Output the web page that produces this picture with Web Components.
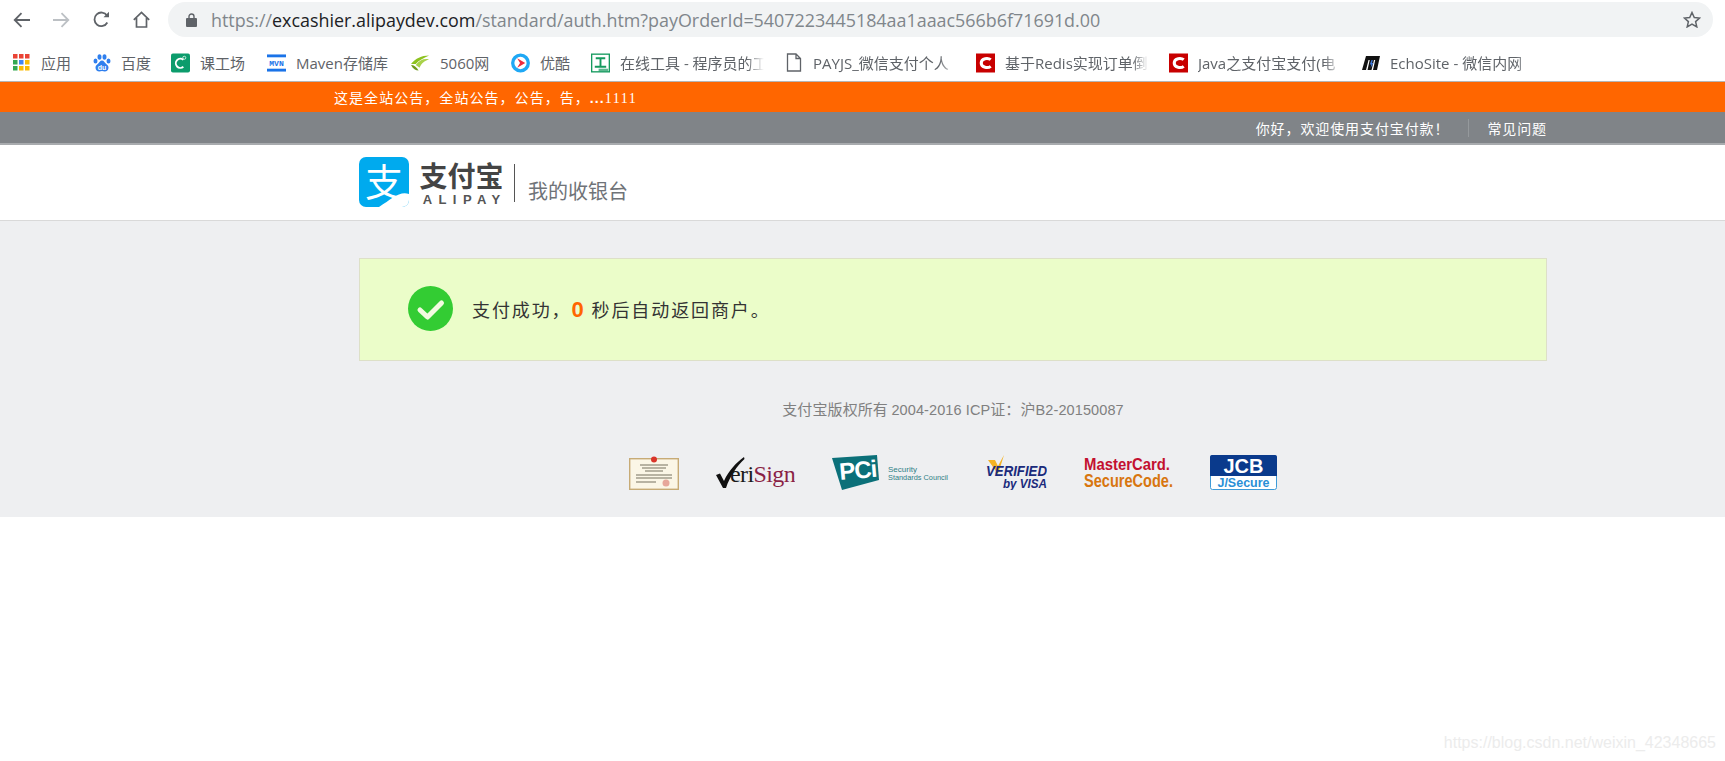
<!DOCTYPE html>
<html lang="zh">
<head>
<meta charset="utf-8">
<title>我的收银台</title>
<style>
  html, body { margin: 0; background: #fff; }
  body { position: relative; height: 761px; overflow: hidden; font-family: "Open Sans", "Noto Sans CJK SC", sans-serif; }
</style>
</head>
<body>
<browser-toolbar url-host="excashier.alipaydev.com" url-rest="/standard/auth.htm?payOrderId=5407223445184aa1aaac566b6f71691d.00"></browser-toolbar>
<bookmark-bar>
  <bookmark-item label="应用" width="31">
    <svg slot="icon" width="17" height="17" viewBox="0 0 17 17">
      <rect x="0" y="0" width="4.500" height="4.500" fill="#ea4335"/><rect x="6" y="0" width="4.500" height="4.500" fill="#ea4335"/><rect x="12" y="0" width="4.500" height="4.500" fill="#ea4335"/>
      <rect x="0" y="6" width="4.500" height="4.500" fill="#34a853"/><rect x="6" y="6" width="4.500" height="4.500" fill="#4285f4"/><rect x="12" y="6" width="4.500" height="4.500" fill="#fbbc05"/>
      <rect x="0" y="12" width="4.500" height="4.500" fill="#34a853"/><rect x="6" y="12" width="4.500" height="4.500" fill="#fbbc05"/><rect x="12" y="12" width="4.500" height="4.500" fill="#fbbc05"/>
    </svg>
  </bookmark-item>
  <bookmark-item label="百度" width="30">
    <svg slot="icon" width="18" height="18" viewBox="0 0 18 18" fill="#2f7fee">
      <ellipse cx="2.500" cy="7" rx="2" ry="2.600"/><ellipse cx="6.500" cy="3" rx="2" ry="2.800"/><ellipse cx="11.500" cy="3" rx="2" ry="2.800"/><ellipse cx="15.500" cy="7" rx="2" ry="2.600"/>
      <path d="M9 6.500c2 0 2.600 2 4 3.200 1.600 1.300 2.500 2.300 2.500 4 0 2.300-1.700 3.800-3.800 3.800-1 0-1.700-.4-2.700-.4s-1.700.4-2.700.4c-2.100 0-3.800-1.500-3.800-3.800 0-1.700.9-2.700 2.500-4C6.400 8.500 7 6.500 9 6.500z"/>
      <text x="9" y="15.500" text-anchor="middle" font-family="Liberation Sans" font-weight="700" font-size="7" fill="#fff">du</text>
    </svg>
  </bookmark-item>
  <bookmark-item label="课工场" width="47">
    <svg slot="icon" width="20" height="20" viewBox="0 0 20 20">
      <rect width="20" height="20" rx="2" fill="#0c9c6c"/>
      <path d="M13 6.700A4.800 4.800 0 1 0 13 14" fill="none" stroke="#fff" stroke-width="2"/>
      <circle cx="14" cy="4.500" r="1.600" fill="none" stroke="#cfeee2"/>
    </svg>
  </bookmark-item>
  <bookmark-item label="Maven存储库" width="95">
    <svg slot="icon" width="20" height="18" viewBox="0 0 20 18">
      <rect width="20" height="3" fill="#1a73e8"/><rect y="15" width="20" height="3" fill="#1a73e8"/>
      <text x="10" y="12.500" font-family="Liberation Mono" font-weight="700" font-size="8.500" text-anchor="middle" fill="#1a73e8">MVN</text>
    </svg>
  </bookmark-item>
  <bookmark-item label="5060网" width="51">
    <svg slot="icon" width="20" height="16" viewBox="0 0 20 16">
      <path d="M0 9C5 3 11 0 19 0 13 3 8 5 5 9z" fill="#8dc21f"/>
      <path d="M5 10C9 5 13 3 19 4 14 6 11 8 9 13z" fill="#a9d24a"/>
      <path d="M0 10C3 10 6 12 8 16 5 16 2 14 0 10z" fill="#6f9a1c"/>
    </svg>
  </bookmark-item>
  <bookmark-item label="优酷" width="31">
    <svg slot="icon" width="20" height="20" viewBox="0 0 20 20">
      <circle cx="10" cy="10" r="8.200" fill="none" stroke="#1fa8f5" stroke-width="3.500"/>
      <path d="M6.500 5L15 10l-8.500 5 3-5z" fill="#ee2b3d"/>
    </svg>
  </bookmark-item>
  <bookmark-item label="在线工具 - 程序员的工" width="144" fade>
    <svg slot="icon" width="20" height="20" viewBox="0 0 20 20">
      <rect x=".7" y=".7" width="18.600" height="18.600" fill="#fff" stroke="#159a5e" stroke-width="1.400"/>
      <path d="M5 5h10M10 5v9M4 14h12" stroke="#159a5e" stroke-width="2" fill="none"/>
      <rect x="8" y="16" width="10" height="3" fill="#159a5e" opacity=".7"/>
    </svg>
  </bookmark-item>
  <bookmark-item label="PAYJS_微信支付个人" width="143" fade>
    <svg slot="icon" width="16" height="19" viewBox="0 0 16 19">
      <path d="M1.500 1h8.500l4.500 4.500V18h-13z M10 1v4.500h4.500" fill="#fff" stroke="#5f6368" stroke-width="1.300"/>
    </svg>
  </bookmark-item>
  <bookmark-item label="基于Redis实现订单倒" width="144" fade>
    <svg slot="icon" width="20" height="20" viewBox="0 0 20 20">
      <rect width="20" height="20" fill="#c80000"/>
      <path d="M15.500 6.500C13 4.500 5.500 4.500 5.500 10s7.500 5.500 10 3.500" fill="none" stroke="#fff" stroke-width="3.200"/>
    </svg>
  </bookmark-item>
  <bookmark-item label="Java之支付宝支付(电" width="143" fade>
    <svg slot="icon" width="20" height="20" viewBox="0 0 20 20">
      <rect width="20" height="20" fill="#c80000"/>
      <path d="M15.500 6.500C13 4.500 5.500 4.500 5.500 10s7.500 5.500 10 3.500" fill="none" stroke="#fff" stroke-width="3.200"/>
    </svg>
  </bookmark-item>
  <bookmark-item label="EchoSite - 微信内网" width="143" fade>
    <svg slot="icon" width="18" height="14" viewBox="0 0 18 14">
      <path d="M4 0h14l-3 14h-4l2.200-10h-1.200L9.500 14h-4L7.700 4H6.500L4 14H0z" fill="#111"/>
      <path d="M9.500 4L7.800 8.500h1.500L8.500 12l3-5H10l.8-3z" fill="#3f78d8"/>
    </svg>
  </bookmark-item>
</bookmark-bar>
<notice-bar>这是全站公告，全站公告，公告，告，<b>...</b><span>1111</span></notice-bar>
<top-nav greeting="你好，欢迎使用支付宝付款！" link="常见问题"></top-nav>
<site-header title="我的收银台"></site-header>
<page-main>
  <result-card>支付成功，<em>0</em> 秒后自动返回商户。</result-card>
  <page-footer>支付宝版权所有 <span>2004-2016 ICP</span>证：沪<span>B2-20150087</span></page-footer>
  <trust-logos></trust-logos>
</page-main>
<water-mark>https://blog.csdn.net/weixin_42348665</water-mark>

<script>
class BrowserToolbar extends HTMLElement {
  constructor() {
    super();
    this.attachShadow({ mode: 'open' });
    this.shadowRoot.innerHTML = `
      <style>
        :host { display: flex; align-items: flex-start; height: 44px; padding: 2px 12px 0 13px; box-sizing: border-box; }
        .nav { display: flex; gap: 23px; height: 35px; align-items: center; width: 155px; flex: none; }
        svg { flex: none; display: block; }
        .bar { flex: 1; height: 35px; background: #f1f3f4; border-radius: 18px; display: flex; align-items: center; padding: 0 12px 0 18px; }
        .url { margin-left: 14px; flex: 1; font: 17.900px "Open Sans", sans-serif; color: #80868b; white-space: nowrap; }
        .url b { font-weight: 400; color: #202124; }
      </style>
      <div class="nav">
        <svg width="17" height="16" viewBox="0 0 17 16" fill="none" stroke="#5f6368" stroke-width="1.800"><path d="M17 8H2M8.500 1.200L1.700 8l6.800 6.800"/></svg>
        <svg width="17" height="16" viewBox="0 0 17 16" fill="none" stroke="#bcc0c4" stroke-width="1.800"><path d="M0 8h15M8.500 1.200L15.300 8l-6.800 6.800"/></svg>
        <svg width="17" height="17" viewBox="0 0 17 17" fill="none" stroke="#5f6368" stroke-width="1.800"><path d="M14.300 11.500A6.800 6.800 0 1 1 14 4.600"/><path d="M16 .8v5.500h-5.500z" fill="#5f6368" stroke="none"/></svg>
        <svg width="17" height="17" viewBox="0 0 17 17" fill="none" stroke="#5f6368" stroke-width="1.700"><path d="M.8 8.800L8.500 1.500l7.700 7.300M3.500 7v9h10V7"/></svg>
      </div>
      <div class="bar">
        <svg width="11" height="14" viewBox="0 0 11 14"><path d="M3 5V3.500a2.500 2.500 0 0 1 5 0V5" fill="none" stroke="#5f6368" stroke-width="1.400"/><rect y="5" width="11" height="9" rx="1" fill="#5f6368"/></svg>
        <span class="url">https://<b>${this.getAttribute('url-host')}</b>${this.getAttribute('url-rest')}</span>
        <svg width="18" height="17" viewBox="0 0 18 17" fill="none" stroke="#5f6368" stroke-width="1.500"><path d="M9 1.500l2.300 5 5.300.5-4 3.600 1.200 5.300L9 13.200l-4.800 2.700 1.200-5.300-4-3.600 5.300-.5z"/></svg>
      </div>`;
  }
}

class BookmarkBar extends HTMLElement {
  constructor() {
    super();
    this.attachShadow({ mode: 'open' });
    this.shadowRoot.innerHTML = `
      <style>
        :host { display: flex; align-items: center; gap: 20px; height: 38px; padding: 0 0 0 12px; box-sizing: border-box; border-bottom: 1px solid #b5b5b5; }
      </style>
      <slot></slot>`;
  }
}

class BookmarkItem extends HTMLElement {
  constructor() {
    super();
    this.attachShadow({ mode: 'open' });
    const fade = this.hasAttribute('fade');
    this.shadowRoot.innerHTML = `
      <style>
        :host { display: flex; align-items: center; gap: 10px; flex: none; }
        .icon { display: flex; width: 19px; justify-content: center; }
        .text { width: ${this.getAttribute('width')}px; overflow: hidden; white-space: nowrap; font: 15px "Open Sans", "Noto Sans CJK SC", sans-serif; color: #5f6368; line-height: 20px;
          ${fade ? '-webkit-mask-image: linear-gradient(to right, #000 88%, transparent);' : ''} }
      </style>
      <span class="icon"><slot name="icon"></slot></span>
      <span class="text">${this.getAttribute('label')}</span>`;
  }
}

class NoticeBar extends HTMLElement {
  constructor() {
    super();
    this.attachShadow({ mode: 'open' });
    this.shadowRoot.innerHTML = `
      <style>
        :host { display: flex; align-items: center; height: 30px; padding-left: 334px; background: #ff6600; color: #fff;
          font: 14px "Noto Sans CJK SC", sans-serif; letter-spacing: 1.050px; }
        ::slotted(b) { font-family: "Liberation Sans", sans-serif; }
        ::slotted(span) { font-family: "Liberation Serif", serif; letter-spacing: 1.500px; }
      </style>
      <div><slot></slot></div>`;
  }
}

class TopNav extends HTMLElement {
  constructor() {
    super();
    this.attachShadow({ mode: 'open' });
    this.shadowRoot.innerHTML = `
      <style>
        :host { display: flex; align-items: center; justify-content: flex-end; height: 33px; box-sizing: border-box; padding-right: 178px; background: #808488; border-bottom: 2px solid #a8abae; color: #fff;
          font: 14px "Noto Sans CJK SC", sans-serif; letter-spacing: .9px; }
        i { width: 1px; height: 18px; background: #95999c; margin: 0 18px 0 19px; }
      </style>
      <span>${this.getAttribute('greeting')}</span><i></i><span>${this.getAttribute('link')}</span>`;
  }
}

class SiteHeader extends HTMLElement {
  constructor() {
    super();
    this.attachShadow({ mode: 'open' });
    this.shadowRoot.innerHTML = `
      <style>
        :host { display: flex; align-items: center; height: 76px; box-sizing: border-box; padding-left: 359px; background: #fff; border-bottom: 1px solid #d9d9d9; font-family: "Noto Sans CJK SC", sans-serif; }
        .mark { position: relative; width: 50px; height: 50px; border-radius: 7px; overflow: hidden; background: #00aaee; flex: none; margin-top: -1px; }
        .mark span { position: absolute; left: 6px; top: -2px; font-size: 38px; line-height: 50px; color: #fff; font-weight: 400; }
        .mark svg { position: absolute; left: 0; top: 0; }
        .brand { margin-left: 9px; width: 87px; display: flex; flex-direction: column; align-items: center; color: #444; }
        .brand b { font-size: 28px; line-height: 30px; font-weight: 700; }
        .brand small { margin-top: 3px; font: 700 13px/13px "Liberation Sans", sans-serif; letter-spacing: 6.400px; margin-right: -6.400px; color: #555; }
        .rule { width: 1px; height: 38px; background: #555; margin: 0 13px 0 9px; }
        .title { font-size: 20px; color: #6f7378; align-self: flex-end; line-height: 30px; margin-bottom: 14px; }
      </style>
      <div class="mark">
        <span>支</span>
        <svg width="50" height="50" viewBox="0 0 50 50"><path d="M50 37C40 34 33 42 20 50H50z" fill="#fff"/></svg>
      </div>
      <div class="brand"><b>支付宝</b><small>ALIPAY</small></div>
      <div class="rule"></div>
      <div class="title">${this.getAttribute('title')}</div>`;
  }
}

class PageMain extends HTMLElement {
  constructor() {
    super();
    this.attachShadow({ mode: 'open' });
    this.shadowRoot.innerHTML = `
      <style>
        :host { display: block; height: 296px; box-sizing: border-box; padding: 37px 0 0 359px; background: #eeeff1; }
        .wrap { width: 1188px; display: flex; flex-direction: column; align-items: stretch; }
      </style>
      <div class="wrap"><slot></slot></div>`;
  }
}

class ResultCard extends HTMLElement {
  constructor() {
    super();
    this.attachShadow({ mode: 'open' });
    this.shadowRoot.innerHTML = `
      <style>
        :host { display: flex; align-items: center; height: 103px; box-sizing: border-box; padding-left: 48px; background: #ebfdc9; border: 1px solid #dde0c8;
          font: 18px "Noto Sans CJK SC", sans-serif; color: #333; letter-spacing: 1.900px; }
        svg { flex: none; margin: -3px 19px 0 0; }
        ::slotted(em) { font: 700 22px "Liberation Sans", sans-serif; color: #ff6600; }
      </style>
      <svg width="45" height="45" viewBox="0 0 45 45"><circle cx="22.500" cy="22.500" r="22.500" fill="#33cc33"/><path d="M12 24l7.500 7 14-14" fill="none" stroke="#f2fbe0" stroke-width="5" stroke-linecap="round" stroke-linejoin="round"/></svg>
      <div><slot></slot></div>`;
  }
}

class PageFooter extends HTMLElement {
  constructor() {
    super();
    this.attachShadow({ mode: 'open' });
    this.shadowRoot.innerHTML = `
      <style>
        :host { display: block; margin-top: 36px; text-align: center; font: 15px/24px "Noto Sans CJK SC", sans-serif; color: #808080; letter-spacing: .1px; }
        ::slotted(span) { font: 14.500px/24px "Liberation Sans", sans-serif; }
      </style>
      <slot></slot>`;
  }
}

class TrustLogos extends HTMLElement {
  constructor() {
    super();
    this.attachShadow({ mode: 'open' });
    this.shadowRoot.innerHTML = `
      <style>
        :host { display: flex; justify-content: center; align-items: center; gap: 37px; margin-top: 33px; }
        svg { display: block; flex: none; }
      </style>
      <svg width="50" height="34" viewBox="0 0 50 34">
        <rect x=".7" y="2.700" width="48.600" height="30.600" fill="#fbf6e6" stroke="#c7ab76" stroke-width="1.400"/>
        <circle cx="25" cy="3.500" r="3" fill="#d9352a"/>
        <path d="M11 9h28M13 12h24M16 15h18M7 19h36M7 22h36M7 26h20" stroke="#77705f" stroke-width="1.100" fill="none"/>
        <circle cx="37" cy="27" r="3.500" fill="#e7a79a"/>
      </svg>
      <svg width="79" height="34" viewBox="0 0 79 34">
        <path d="M0 19l4-1.500 4 7.500C13 14 20 7 28 1l.5 2C21 10 14 20 10 32H7z" fill="#111"/>
        <text x="14" y="26" font-family="Liberation Serif" font-size="24" letter-spacing="-.6" fill="#1a1a1a">eri<tspan fill="#8a1f45">Sign</tspan></text>
      </svg>
      <svg width="117" height="35" viewBox="0 0 117 35">
        <path d="M0 3L45 0l2 25-37 10z" fill="#0b7079"/>
        <text x="8" y="25" font-family="Liberation Sans" font-weight="700" font-size="24" fill="#fff" letter-spacing="-1" transform="rotate(-5 8 25)">PCi</text>
        <text x="56" y="17" font-family="Liberation Sans" font-size="8" fill="#2f7f86">Security</text>
        <text x="56" y="25" font-family="Liberation Sans" font-size="8" fill="#2f7f86" textLength="60" lengthAdjust="spacingAndGlyphs">Standards Council</text>
      </svg>
      <svg width="61" height="35" viewBox="0 0 61 35">
        <path d="M2 5h7l3 6 6-11-6 19z" fill="#f4b223"/>
        <text x="0" y="21" font-family="Liberation Sans" font-weight="700" font-style="italic" font-size="14" fill="#1a2b7c" textLength="61" lengthAdjust="spacingAndGlyphs">VERIFIED</text>
        <text x="17" y="33" font-family="Liberation Sans" font-weight="700" font-style="italic" font-size="12" fill="#1a2b7c" textLength="44" lengthAdjust="spacingAndGlyphs">by VISA</text>
      </svg>
      <svg width="89" height="35" viewBox="0 0 89 35">
        <text x="0" y="15" font-family="Liberation Sans" font-weight="700" font-size="17" fill="#c3102f" textLength="86" lengthAdjust="spacingAndGlyphs">MasterCard.</text>
        <text x="0" y="32" font-family="Liberation Sans" font-weight="700" font-size="18" fill="#d8760f" textLength="89" lengthAdjust="spacingAndGlyphs">SecureCode.</text>
      </svg>
      <svg width="67" height="35" viewBox="0 0 67 35">
        <rect x=".5" y=".5" width="66" height="34" rx="2" fill="#fff" stroke="#3e9bd8"/>
        <path d="M0 2a2 2 0 0 1 2-2h63a2 2 0 0 1 2 2v19H0z" fill="#0a3a8c"/>
        <text x="33.500" y="18" text-anchor="middle" font-family="Liberation Sans" font-weight="700" font-size="20" fill="#fff">JCB</text>
        <text x="33.500" y="32" text-anchor="middle" font-family="Liberation Sans" font-weight="700" font-size="12.500" fill="#2a8fd6">J/Secure</text>
      </svg>`;
  }
}

class WaterMark extends HTMLElement {
  constructor() {
    super();
    this.attachShadow({ mode: 'open' });
    this.shadowRoot.innerHTML = `
      <style>
        :host { position: absolute; right: 9px; top: 732px; font: 16px/22px "Liberation Sans", sans-serif; color: #ececec; }
      </style>
      <slot></slot>`;
  }
}

customElements.define('browser-toolbar', BrowserToolbar);
customElements.define('bookmark-bar', BookmarkBar);
customElements.define('bookmark-item', BookmarkItem);
customElements.define('notice-bar', NoticeBar);
customElements.define('top-nav', TopNav);
customElements.define('site-header', SiteHeader);
customElements.define('page-main', PageMain);
customElements.define('result-card', ResultCard);
customElements.define('page-footer', PageFooter);
customElements.define('trust-logos', TrustLogos);
customElements.define('water-mark', WaterMark);
</script>
</body>
</html>
